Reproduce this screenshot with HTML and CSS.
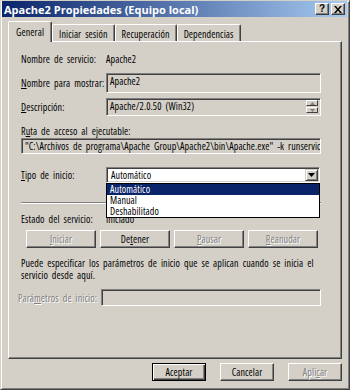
FILE: index.html
```html
<!DOCTYPE html>
<html lang="es">
<head>
    <meta charset="UTF-8">
    <meta name="viewport" content="width=device-width, initial-scale=1.0">
    <title>Apache2 Propiedades (Equipo local)</title>
    <link rel="stylesheet" href="styles.css">
</head>
<body>

    <div class="window">
        <div class="titlebar">
            <span class="title">Apache2 Propiedades (Equipo local)</span>
            <div class="caption-buttons">
                <span class="cap-btn help">?</span>
                <span class="cap-btn close">
                    <svg width="8" height="7" viewBox="0 0 8 7"><path d="M0 0h2l2 2.5L6 0h2L5 3.5 8 7H6L4 4.5 2 7H0l3-3.5z" fill="#000"/></svg>
                </span>
            </div>
        </div>

        <div class="dialog">
            <div class="tabs">
                <div class="tab active">General</div>
                <div class="tab">Iniciar sesión</div>
                <div class="tab">Recuperación</div>
                <div class="tab">Dependencias</div>
            </div>

            <div class="panel">
                <div class="row first">
                    <span class="label">Nombre de servicio:</span>
                    <span>Apache2</span>
                </div>

                <div class="row display-name">
                    <span class="label"><u>N</u>ombre para mostrar:</span>
                    <div class="field readonly tall">Apache2</div>
                </div>

                <div class="row description">
                    <span class="label"><u>D</u>escripción:</span>
                    <div class="field readonly desc">
                        Apache/2.0.50 (Win32)
                        <div class="spin">
                            <span class="spin-btn"><svg width="5" height="3" viewBox="0 0 5 3"><path d="M2.5 0L5 3H0z" fill="#808080"/></svg></span>
                            <span class="spin-btn"><svg width="5" height="3" viewBox="0 0 5 3"><path d="M0 0h5L2.5 3z" fill="#808080"/></svg></span>
                        </div>
                    </div>
                </div>

                <div class="path-label">R<u>u</u>ta de acceso al ejecutable:</div>
                <div class="field readonly path">"C:\Archivos de programa\Apache Group\Apache2\bin\Apache.exe" -k runservice</div>

                <div class="row startup">
                    <span class="label"><u>T</u>ipo de inicio:</span>
                    <div class="combo">
                        <span class="combo-text">Automático</span>
                        <span class="combo-btn"><svg width="7" height="4" viewBox="0 0 7 4"><path d="M0 0h7L3.5 4z" fill="#000"/></svg></span>
                        <ul class="combo-list">
                            <li class="selected">Automático</li>
                            <li>Manual</li>
                            <li>Deshabilitado</li>
                        </ul>
                    </div>
                </div>

                <div class="separator"></div>

                <div class="row status">
                    <span class="label">Estado del servicio:</span>
                    <span>Iniciado</span>
                </div>

                <div class="service-buttons">
                    <span class="btn disabled"><u>I</u>niciar</span>
                    <span class="btn">De<u>t</u>ener</span>
                    <span class="btn disabled"><u>P</u>ausar</span>
                    <span class="btn disabled"><u>R</u>eanudar</span>
                </div>

                <p class="hint">Puede especificar los parámetros de inicio que se aplican cuando se inicia el<br>servicio desde aquí.</p>

                <div class="row params">
                    <span class="label disabled-text">Pará<u>m</u>etros de inicio:</span>
                    <div class="field readonly params-field"></div>
                </div>
            </div>

            <div class="footer">
                <span class="btn default">Aceptar</span>
                <span class="btn">Cancelar</span>
                <span class="btn disabled">Apli<u>c</u>ar</span>
            </div>
        </div>
    </div>

</body>
</html>
```

FILE: styles.css
```css
body {
    margin: 0;
    background-color: #d4d0c8;
    font-family: "Open Sans", "Liberation Sans", sans-serif;
    font-stretch: 87%;
    font-size: 10px;
    letter-spacing: 0.1px;
    word-spacing: 2px;
    color: black;
}

u {
    text-underline-offset: 1px;
}

.window {
    width: 350px;
    height: 390px;
    box-sizing: border-box;
    background-color: #d4d0c8;
    border: 1px solid;
    border-color: #d4d0c8 #404040 #404040 #d4d0c8;
    box-shadow: inset 1px 1px #fff, inset -1px -1px #808080;
    padding: 0 2px 2px 1px;
}

.titlebar {
    height: 16px;
    display: flex;
    align-items: center;
    justify-content: space-between;
    background: linear-gradient(to right, #0a246a, #a6caf0);
    padding: 0 2px 0 2px;
}

.title {
    color: white;
    font-weight: bold;
    font-size: 11px;
    font-stretch: 100%;
    letter-spacing: 0;
    word-spacing: 0;
}

.caption-buttons {
    display: flex;
    gap: 2px;
}

.cap-btn {
    width: 14px;
    height: 12px;
    box-sizing: border-box;
    display: flex;
    align-items: center;
    justify-content: center;
    background-color: #d4d0c8;
    border: 1px solid;
    border-color: #fff #404040 #404040 #fff;
    box-shadow: inset -1px -1px #808080;
    font-family: "Liberation Sans", sans-serif;
    font-weight: bold;
    font-size: 10px;
    line-height: 1;
}

.dialog {
    padding: 4px 5px 0 6px;
}

/* pestañas */

.tabs {
    display: flex;
    align-items: flex-end;
    height: 20px;
    position: relative;
    z-index: 1;
}

.tab {
    height: 17px;
    box-sizing: border-box;
    padding: 2px 6px 0 6px;
    border-left: 1px solid #fff;
    border-right: 1px solid #404040;
    box-shadow: inset -1px 0 #808080;
    border-top: 1px solid #fff;
    border-radius: 2px 2px 0 0;
    white-space: nowrap;
}

.tab.active {
    height: 21px;
    margin-bottom: -1px;
    padding: 3px 7px 0 7px;
    background-color: #d4d0c8;
}

.panel {
    height: 318px;
    box-sizing: border-box;
    border: 1px solid;
    border-color: #fff #404040 #404040 #fff;
    box-shadow: inset -1px -1px #808080;
    padding: 11px 20px 0 12px;
    display: flex;
    flex-direction: column;
}

.row {
    display: flex;
    align-items: center;
    line-height: 12px;
}

.label {
    width: 85px;
    flex-shrink: 0;
    white-space: nowrap;
}

.display-name {
    margin-top: 8px;
}

.description {
    margin-top: 5px;
}

/* campos */

.field {
    box-sizing: border-box;
    border: 1px solid;
    border-color: #808080 #fff #fff #808080;
    box-shadow: inset 1px 1px #404040, inset -1px -1px #d4d0c8;
    padding: 2px 3px;
    line-height: 12px;
    white-space: nowrap;
    overflow: hidden;
}

.field.readonly {
    background-color: #d4d0c8;
}

.tall {
    flex: 1;
    height: 20px;
    padding-top: 1px;
}

.desc {
    flex: 1;
    height: 18px;
    padding-top: 1px;
    display: flex;
    justify-content: space-between;
}

.spin {
    display: flex;
    flex-direction: column;
    gap: 1px;
    margin-right: -1px;
}

.spin-btn {
    width: 12px;
    height: 7px;
    box-sizing: border-box;
    display: flex;
    align-items: center;
    justify-content: center;
    border: 1px solid;
    border-color: #fff #404040 #404040 #fff;
    background-color: #d4d0c8;
}

.path-label {
    margin-top: 9px;
    line-height: 12px;
}

.path {
    height: 16px;
    margin-top: 1px;
    padding: 1px 3px;
    background-color: #d8d5ce;
}

.startup {
    margin-top: 13px;
}

.combo {
    flex: 1;
    height: 16px;
    box-sizing: border-box;
    position: relative;
    background-color: white;
    border: 1px solid;
    border-color: #808080 #fff #fff #808080;
    box-shadow: inset 1px 1px #404040, inset -1px -1px #d4d0c8;
    display: flex;
    align-items: center;
    justify-content: space-between;
    padding: 0 1px 0 4px;
    margin-right: 1px;
}

.combo-btn {
    width: 13px;
    height: 12px;
    box-sizing: border-box;
    display: flex;
    align-items: center;
    justify-content: center;
    background-color: #d4d0c8;
    border: 1px solid;
    border-color: #d4d0c8 #404040 #404040 #d4d0c8;
    box-shadow: inset 1px 1px #fff, inset -1px -1px #808080;
}

.combo-list {
    position: absolute;
    top: 15px;
    left: -1px;
    right: -1px;
    margin: 0;
    padding: 0;
    list-style: none;
    background-color: white;
    border: 1px solid black;
    z-index: 5;
}

.combo-list li {
    height: 11px;
    line-height: 11px;
    padding-left: 3px;
}

.combo-list li.selected {
    background-color: #0a246a;
    color: white;
}

.separator {
    margin-top: 19px;
    height: 0;
    border-top: 1px solid #808080;
    border-bottom: 1px solid #fff;
}

.status {
    margin-top: 9px;
}

/* botones */

.service-buttons {
    display: flex;
    gap: 4px;
    margin-top: 5px;
    padding-left: 5px;
}

.btn {
    width: 70px;
    height: 18px;
    box-sizing: border-box;
    display: flex;
    align-items: center;
    justify-content: center;
    background-color: #d4d0c8;
    border: 1px solid;
    border-color: #fff #404040 #404040 #fff;
    box-shadow: inset -1px -1px #808080;
}

.btn.disabled,
.disabled-text {
    color: #808080;
    text-shadow: 1px 1px #fff;
}

.hint {
    margin: 9px 0 0 0;
    line-height: 12px;
}

.params {
    margin-top: 8px;
}

.params .label {
    width: 80px;
    margin-left: -3px;
    margin-right: 3px;
}

.params-field {
    flex: 1;
    height: 17px;
}

.footer {
    display: flex;
    justify-content: flex-end;
    gap: 14px;
    margin-top: 4px;
}

.footer .btn {
    width: 54px;
}

.btn.default {
    border-color: #000;
    box-shadow: inset 1px 1px #fff, inset -1px -1px #404040, inset -2px -2px #808080;
}
```
